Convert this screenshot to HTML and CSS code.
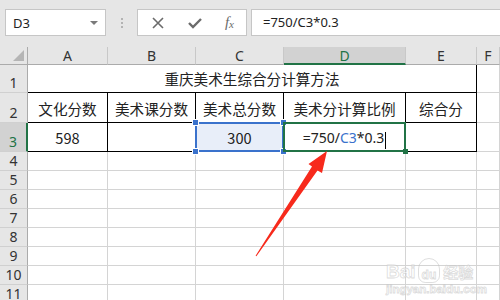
FILE: index.html
```html
<!DOCTYPE html>
<html lang="zh-CN">
<head>
<meta charset="utf-8">
<title>Excel</title>
<link rel="stylesheet" href="styles.css">
</head>
<body>
<div class="app">
  <div class="toolbar">
    <div class="namebox"><span>D3</span><span class="dropdown"></span></div>
    <div class="grip"><i></i><i></i><i></i></div>
    <div class="fxbox">
      <svg class="ico" width="14" height="14" viewBox="0 0 14 14"><path d="M2 2 L12 12 M12 2 L2 12" stroke="#6b6b6b" stroke-width="1.6" fill="none"/></svg>
      <svg class="ico" width="16" height="14" viewBox="0 0 16 14"><path d="M2 7 L6 11 L14 3" stroke="#6b6b6b" stroke-width="2.4" fill="none"/></svg>
      <span class="fx">f<sub>x</sub></span>
    </div>
    <div class="formula">=750/C3*0.3</div>
  </div>

  <div class="sheet">
    <div class="corner"><span class="tri"></span></div>
    <div class="ch">A</div><div class="ch">B</div><div class="ch">C</div><div class="ch sel">D</div><div class="ch">E</div><div class="ch">F</div>

    <div class="rh">1</div>
    <div class="c title">重庆美术生综合分计算方法</div>
    <div class="c"></div>

    <div class="rh">2</div>
    <div class="c t">文化分数</div><div class="c t">美术课分数</div><div class="c t">美术总分数</div><div class="c t">美术分计算比例</div><div class="c t">综合分</div><div class="c"></div>

    <div class="rh rsel">3</div>
    <div class="c t">598</div><div class="c t"></div>
    <div class="c t ref-cell">300<span class="h h1"></span><span class="h h2"></span><span class="h h3"></span><span class="h h4"></span></div>
    <div class="c t edit">=750/<span class="ref">C3</span>*0.3<span class="caret"></span><span class="gh"></span></div>
    <div class="c t"></div><div class="c"></div>

    <div class="rh">4</div><div class="c"></div><div class="c"></div><div class="c"></div><div class="c"></div><div class="c"></div><div class="c"></div>
    <div class="rh">5</div><div class="c"></div><div class="c"></div><div class="c"></div><div class="c"></div><div class="c"></div><div class="c"></div>
    <div class="rh">6</div><div class="c"></div><div class="c"></div><div class="c"></div><div class="c"></div><div class="c"></div><div class="c"></div>
    <div class="rh">7</div><div class="c"></div><div class="c"></div><div class="c"></div><div class="c"></div><div class="c"></div><div class="c"></div>
    <div class="rh">8</div><div class="c"></div><div class="c"></div><div class="c"></div><div class="c"></div><div class="c"></div><div class="c"></div>
    <div class="rh">9</div><div class="c"></div><div class="c"></div><div class="c"></div><div class="c"></div><div class="c"></div><div class="c"></div>
    <div class="rh">10</div><div class="c"></div><div class="c"></div><div class="c"></div><div class="c"></div><div class="c"></div><div class="c"></div>
    <div class="rh">11</div><div class="c"></div><div class="c"></div><div class="c"></div><div class="c"></div><div class="c"></div><div class="c"></div>
  </div>

  <svg class="arrow" width="500" height="300" viewBox="0 0 500 300">
    <polygon points="327,151 322,173 317.5,170.5 256.4,256.3 255.6,255.7 312,166.5 308.5,164" fill="#f72a1c"/>
  </svg>

  <div class="watermark">
    <div class="wm1"><span>Bai</span><span class="paw">du</span><span class="jy">经验</span></div>
    <div class="wm2">jingyan.baidu.com</div>
  </div>
</div>
</body>
</html>
```

FILE: styles.css
```css
* { box-sizing: border-box; }
html, body { margin: 0; padding: 0; }
body {
  width: 500px;
  height: 300px;
  overflow: hidden;
  background: #ffffff;
  font-family: "Noto Sans CJK SC", "Noto Sans", sans-serif;
}
.app { position: relative; width: 500px; height: 300px; overflow: hidden; }

/* toolbar */
.toolbar {
  height: 47px;
  background: #e6e6e6;
  display: flex;
  align-items: flex-start;
  padding: 9px 0 0 5px;
}
.namebox {
  width: 101px;
  height: 27px;
  background: #fff;
  border: 1px solid #c6c6c6;
  display: flex;
  align-items: center;
  justify-content: space-between;
  padding: 0 7px 0 7px;
  font-family: "Noto Sans", sans-serif;
  font-size: 13px;
  color: #222;
}
.dropdown {
  width: 0; height: 0;
  border-left: 4px solid transparent;
  border-right: 4px solid transparent;
  border-top: 4px solid #7a7a7a;
}
.grip {
  width: 31px;
  height: 27px;
  display: flex;
  flex-direction: column;
  align-items: center;
  justify-content: center;
  gap: 2px;
}
.grip i { display: block; width: 2px; height: 2px; background: #b3b3b3; }
.fxbox {
  width: 110px;
  height: 27px;
  background: #fff;
  border: 1px solid #c6c6c6;
  display: flex;
  align-items: center;
  padding: 0 12px 0 13px;
  justify-content: space-between;
}
.ico { display: block; }
.fx {
  font-family: "Liberation Serif", serif;
  font-style: italic;
  font-size: 15px;
  color: #6b6b6b;
  line-height: 1;
}
.fx sub { font-size: 11px; vertical-align: -1px; }
.formula {
  margin-left: 4px;
  flex: 1;
  height: 27px;
  background: #fff;
  border: 1px solid #c6c6c6;
  border-right: none;
  padding-left: 11px;
  font-family: "Noto Sans", sans-serif;
  font-size: 13px;
  line-height: 25px;
  color: #222;
}

/* sheet */
.sheet {
  display: grid;
  grid-template-columns: 28px 80px 88px 88px 122px 71px 1fr;
  grid-template-rows: 18px 28px 30px 29px repeat(8, 19px);
}
.corner {
  background: #e6e6e6;
  border-right: 1px solid #ababab;
  border-bottom: 1px solid #ababab;
  position: relative;
}
.tri {
  position: absolute;
  right: 3px; bottom: 3px;
  width: 0; height: 0;
  border-left: 11px solid transparent;
  border-bottom: 11px solid #b5b5b5;
}
.ch {
  background: #e6e6e6;
  border-right: 1px solid #c8c8c8;
  border-bottom: 1px solid #ababab;
  font-family: "Noto Sans", sans-serif;
  font-size: 14px;
  color: #333;
  display: flex;
  align-items: center;
  justify-content: center;
  line-height: 17px;
}
.ch.sel {
  background: #d2d2d2;
  border-bottom: 2px solid #217346;
  color: #217346;
}
.rh {
  background: #e6e6e6;
  border-right: 1px solid #ababab;
  border-bottom: 1px solid #d0d0d0;
  font-family: "Noto Sans", sans-serif;
  font-size: 14px;
  color: #333;
  display: flex;
  align-items: flex-end;
  justify-content: center;
  line-height: 18px;
}
.rh.rsel {
  background: #d2d2d2;
  border-right: 2px solid #217346;
  color: #217346;
}
.c {
  border-right: 1px solid #d4d4d4;
  border-bottom: 1px solid #d4d4d4;
  font-size: 14.6px;
  color: #222;
  display: flex;
  align-items: flex-end;
  justify-content: center;
  line-height: 20px;
  padding-bottom: 2px;
  white-space: nowrap;
}
.c.title {
  grid-column: 2 / 7;
  border-right: 1px solid #000;
  border-bottom: 1px solid #000;
  padding-bottom: 3px;
}
.c.t {
  border-right: 1px solid #000;
  border-bottom: 1px solid #000;
  padding-bottom: 3px;
}
.ref-cell {
  position: relative;
  background: #e8eef9;
}
.ref-cell::before {
  content: "";
  position: absolute;
  left: -1px; top: -1px; right: -1px; bottom: -1px;
  border: 2px solid #3a72cc;
}
.h {
  position: absolute;
  width: 5px; height: 5px;
  background: #3a72cc;
  border: 1px solid #fff;
  box-sizing: content-box;
}
.h1 { left: -4px; top: -4px; }
.h2 { right: -4px; top: -4px; }
.h3 { left: -4px; bottom: -4px; }
.h4 { right: -4px; bottom: -4px; }
.edit {
  position: relative;
  font-family: "Noto Sans", sans-serif;
  font-size: 14px;
}
.edit::before {
  content: "";
  position: absolute;
  left: -1px; top: -1px; right: -1px; bottom: -1px;
  border: 2px solid #217346;
}
.ref { color: #3a72cc; }
.caret {
  display: inline-block;
  width: 1px;
  height: 17px;
  background: #000;
  margin-left: 1px;
  margin-bottom: -1px;
}
.gh {
  position: absolute;
  right: -3px; bottom: -3px;
  width: 5px; height: 5px;
  background: #217346;
}

/* overlays */
.arrow { position: absolute; left: 0; top: 0; pointer-events: none; }
.watermark {
  position: absolute;
  left: 386px;
  top: 244px;
  width: 100px;
  font-family: "Liberation Sans", sans-serif;
  color: rgba(255,255,255,0.6);
  -webkit-text-stroke: 0.8px rgba(190,190,190,0.55);
}
.wm1 {
  font-size: 19px;
  font-weight: bold;
  line-height: 22px;
  display: flex;
  align-items: flex-end;
  height: 39px;
}
.paw {
  font-size: 12px;
  margin-left: 2px;
  padding: 10px 3px 0;
  border-radius: 12px 12px 8px 8px;
  border: 1.5px solid rgba(190,190,190,0.5);
  line-height: 13px;
}
.jy {
  font-family: "Noto Sans CJK SC", sans-serif;
  font-size: 15px;
  margin-left: 3px;
}
.wm2 {
  font-size: 11.5px;
  font-weight: bold;
  line-height: 13px;
}
```
